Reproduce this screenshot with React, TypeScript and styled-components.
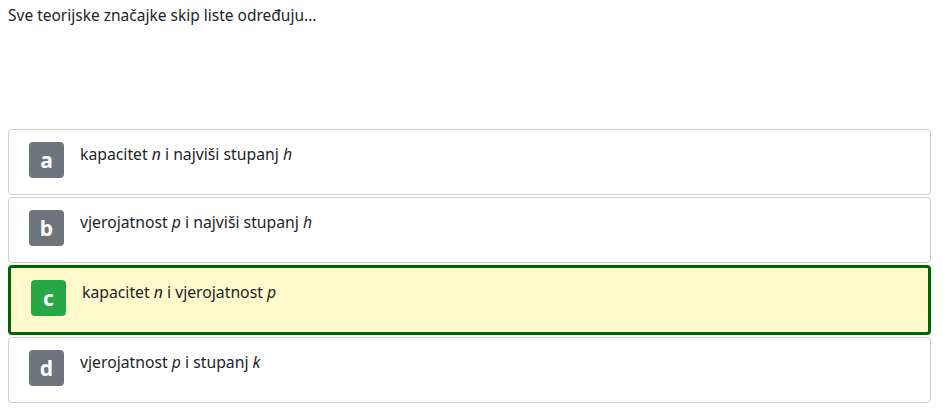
import React from "react";
import styled, { createGlobalStyle } from "styled-components";

const Global = createGlobalStyle`
  html, body { margin: 0; padding: 0; background: #fff; }
  body {
    font-family: "Noto Sans", "Open Sans", sans-serif;
    color: #212529;
  }
`;

const Page = styled.div`
  padding: 4px 12px 0 8px;
`;

const Question = styled.div`
  font-size: 15.5px;
  line-height: 22px;
  margin-bottom: 103px;
`;

const List = styled.div`
  display: flex;
  flex-direction: column;
  gap: 2px;
`;

const Option = styled.div<{ $selected?: boolean }>`
  display: flex;
  align-items: flex-start;
  gap: 16px;
  padding: 12px 20px;
  min-height: 40px;
  border-radius: 4px;
  border: ${(p) => (p.$selected ? "3px solid #006400" : "1px solid #cfcfcf")};
  background: ${(p) => (p.$selected ? "#fff9cc" : "#fff")};
`;

const Badge = styled.div<{ $selected?: boolean }>`
  flex: none;
  width: 35px;
  height: 36px;
  border-radius: 4px;
  background: ${(p) => (p.$selected ? "#28a745" : "#6c757d")};
  color: #fff;
  font-size: 21px;
  font-weight: 700;
  display: flex;
  align-items: center;
  justify-content: center;
`;

const Label = styled.div`
  font-size: 15.75px;
  line-height: 24px;
  i { font-style: italic; }
`;

const options: { key: string; content: React.ReactNode; selected?: boolean }[] = [
  { key: "a", content: <>kapacitet <i>n</i> i najviši stupanj <i>h</i></> },
  { key: "b", content: <>vjerojatnost <i>p</i> i najviši stupanj <i>h</i></> },
  { key: "c", content: <>kapacitet <i>n</i> i vjerojatnost <i>p</i></>, selected: true },
  { key: "d", content: <>vjerojatnost <i>p</i> i stupanj <i>k</i></> },
];

export default function App() {
  return (
    <>
      <Global />
      <Page>
        <Question>Sve teorijske značajke skip liste određuju...</Question>
        <List>
          {options.map((o) => (
            <Option key={o.key} $selected={o.selected}>
              <Badge $selected={o.selected}>{o.key}</Badge>
              <Label>{o.content}</Label>
            </Option>
          ))}
        </List>
      </Page>
    </>
  );
}
